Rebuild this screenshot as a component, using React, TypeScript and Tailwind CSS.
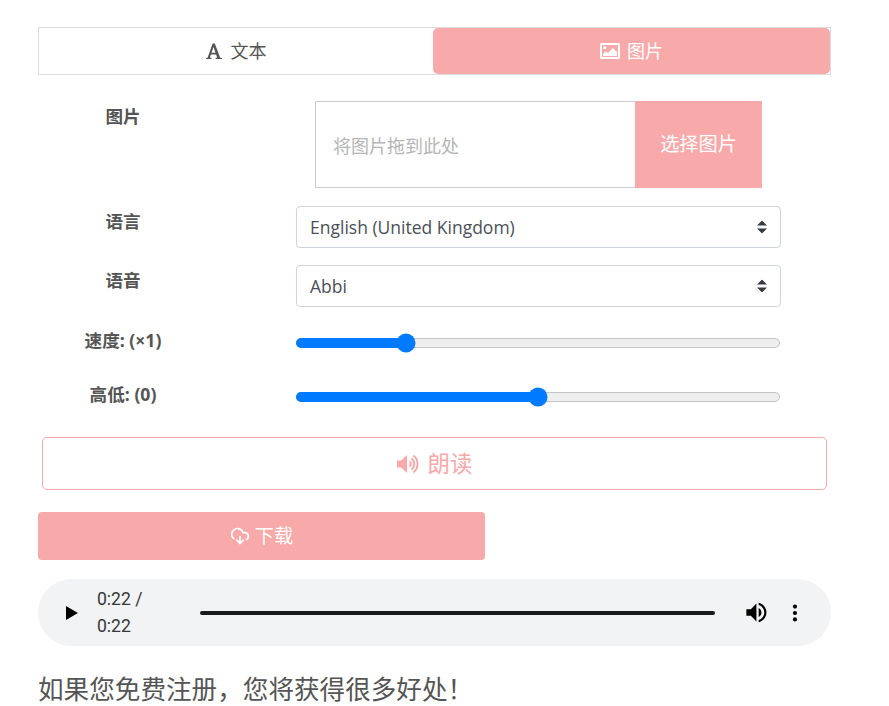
import React from "react";
import { CloudDownload } from "lucide-react";

const FONT = "font-['Open_Sans','Noto_Sans_CJK_SC',sans-serif]";

function Slider({ percent }: { percent: number }) {
  return (
    <div className="relative mt-[10px] ml-[88px] h-[10px] w-[484px] rounded-full border border-[#c4c4c4] bg-[#eeeeee]">
      <div className="absolute -inset-y-px -left-px rounded-full bg-[#007bff]" style={{ width: `${percent}%` }} />
      <div
        className="absolute top-1/2 h-[19px] w-[19px] -translate-x-1/2 -translate-y-1/2 rounded-full bg-[#007bff]"
        style={{ left: `${percent}%` }}
      />
    </div>
  );
}

function Updown() {
  return (
    <svg viewBox="0 0 10 13" className="pointer-events-none absolute right-[14px] top-1/2 h-[13px] w-[10px] -translate-y-1/2" fill="#343a40">
      <path d="M5 0 10 5H0z" />
      <path d="M5 13 0 8h10z" />
    </svg>
  );
}

function Row({ label, children, className, labelClass }: { label: string; children: React.ReactNode; className?: string; labelClass?: string }) {
  return (
    <div className={`flex items-start ${className ?? ""}`}>
      <div className={`w-[170px] shrink-0 text-center text-[17.6px] font-bold leading-[24px] text-[#555555] ${labelClass ?? ""}`}>{label}</div>
      {children}
    </div>
  );
}

function Select({ value }: { value: string }) {
  return (
    <div className="relative ml-[88px] w-[485px]">
      <select className="h-[42px] w-full appearance-none rounded-[4px] border border-[#ced4da] bg-white pl-[13px] text-[17.5px] text-[#495057] outline-none">
        <option>{value}</option>
      </select>
      <Updown />
    </div>
  );
}

export default function App() {
  return (
    <div className={`${FONT} h-[706px] w-[889px] overflow-hidden bg-white pl-[38px] pt-[27px] text-[#555555]`}>
      <div className="flex h-[48px] w-[793px] border border-[#dddddd]">
        <div className="flex w-[394px] items-center justify-center gap-[9px] text-[18px] text-[#555555]">
          <svg viewBox="0 0 16 16" className="h-[16px] w-[16px]" fill="#555555" fillRule="evenodd">
            <path d="M0 16v-1l1.6-.3L6.6.5h2.2l5.4 14.2 1.8.3v1H9.6v-1l1.5-.4-1-3.1H4.9l-1 3.1 1.6.4v1zM5.5 9.8h4L7.5 4z" />
          </svg>
          <span>文本</span>
        </div>
        <div className="flex flex-1 items-center justify-center gap-[7px] rounded-[5px] bg-[#f8a9a9] text-[18px] text-white">
          <svg viewBox="0 0 20 16" className="h-[16px] w-[20px]" fill="#ffffff" fillRule="evenodd">
            <path d="M1.5 0h17A1.5 1.5 0 0 1 20 1.5v13a1.5 1.5 0 0 1-1.5 1.5h-17A1.5 1.5 0 0 1 0 14.500v-13A1.500 1.500 0 0 1 1.500 0zM2 2v12h16V2z" />
            <circle cx="4.800" cy="4.800" r="1.500" />
            <path d="M3 13v-2l3-2.500 2 1.500 5-5 4 4V13z" />
          </svg>
          <span>图片</span>
        </div>
      </div>

      <Row label="图片" className="mt-[26px]" labelClass="pt-[3px]">
        <div className="ml-[107px] flex h-[87px] w-[447px]">
          <div className="flex flex-1 items-center border border-r-0 border-[#cccccc] pl-[17px] pt-[3px] text-[18px] text-[#b5b5b5]">
            将图片拖到此处
          </div>
          <div className="flex w-[127px] items-center justify-center bg-[#f8a9a9] text-[19.2px] text-white">选择图片</div>
        </div>
      </Row>

      <Row label="语言" className="mt-[18px]" labelClass="pt-[3px]">
        <Select value="English (United Kingdom)" />
      </Row>

      <Row label="语音" className="mt-[17px]" labelClass="pt-[3px]">
        <Select value="Abbi" />
      </Row>

      <Row label="速度: (×1)" className="mt-[21px]">
        <Slider percent={22.6} />
      </Row>

      <Row label="高低: (0)" className="mt-[30px]">
        <Slider percent={50} />
      </Row>

      <div className="ml-[4px] mt-[31px] flex h-[53px] w-[785px] items-center justify-center gap-[9px] rounded-[5px] border border-[#f8a9a9] text-[22.4px] text-[#f8a9a9]">
        <svg viewBox="0 0 22 20" className="h-[20px] w-[22px]" fill="none" stroke="#f8a9a9" strokeWidth="2">
          <path d="M0 6.500h4L10 1v18l-6-5.500H0z" fill="#f8a9a9" stroke="none" />
          <path d="M12.500 7.500a3 3 0 0 1 0 5" />
          <path d="M14.500 4.500a7 7 0 0 1 0 11" />
          <path d="M16.500 1.500a11 11 0 0 1 0 17" />
        </svg>
        <span>朗读</span>
      </div>

      <div className="mt-[22px] flex h-[48px] w-[447px] items-center justify-center gap-[5px] rounded-[4px] bg-[#f8a9a9] text-[19.2px] text-white">
        <CloudDownload className="h-[20px] w-[20px]" strokeWidth={2} />
        <span>下载</span>
      </div>

      <div className="mt-[19px] flex h-[67px] w-[793px] items-center rounded-[33.5px] bg-[#f1f3f4] pl-[28px] pr-[24px] font-['Roboto',sans-serif]">
        <svg viewBox="0 0 12 14" className="h-[14px] w-[12px]" fill="#000000">
          <path d="M0 0 12 7 0 14z" />
        </svg>
        <span className="ml-[19px] text-[17.6px] text-[#36383a]">0:22 / 0:22</span>
        <div className="ml-[20px] h-[4px] w-[518px] rounded-full bg-[#1a1a1a]" />
        <svg viewBox="0 0 24 24" className="ml-[28px] h-[27px] w-[27px]" fill="#000000">
          <path d="M3 9v6h4l5 5V4L7 9H3zm13.5 3c0-1.77-1.02-3.29-2.5-4.03v8.05c1.48-.73 2.5-2.25 2.5-4.02zM14 3.230v2.060c2.890.860 5 3.540 5 6.710s-2.110 5.850-5 6.710v2.060c4.010-.910 7-4.490 7-8.770s-2.990-7.860-7-8.770z" />
        </svg>
        <svg viewBox="0 0 24 24" className="ml-[13px] h-[24px] w-[24px]" fill="#000000">
          <circle cx="12" cy="5.500" r="2.100" />
          <circle cx="12" cy="12" r="2.100" />
          <circle cx="12" cy="18.500" r="2.100" />
        </svg>
      </div>

      <p className="mt-[26px] text-[25.6px] leading-[36px] text-[#555555]">如果您免费注册{"\uFF0C"}您将获得很多好处{"\uFF01"}</p>
    </div>
  );
}
